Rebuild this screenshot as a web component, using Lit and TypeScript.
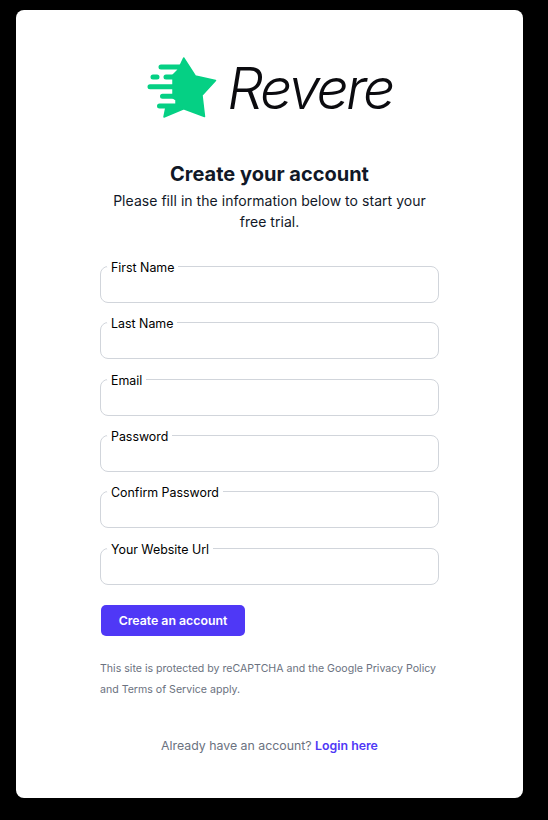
import { LitElement, html, css } from "lit";
import { customElement } from "lit/decorators.js";

const FIELDS = ["First Name", "Last Name", "Email", "Password", "Confirm Password", "Your Website Url"];

@customElement("app-root")
export class AppRoot extends LitElement {
  static styles = css`
    :host { display: block; width: 548px; height: 820px; background: #000; font-family: Inter, "Liberation Sans", sans-serif; overflow: hidden; }
    .card { margin: 10px 25px 0 16px; height: 788px; box-sizing: border-box; background: #fff; border-radius: 8px; padding: 46px 84px 0; display: flex; flex-direction: column; }
    .logo { display: flex; align-items: center; justify-content: center; gap: 10px; height: 62px; }
    .logo svg { width: 71px; height: 63px; flex: none; }
    .word { font-family: Inter, sans-serif; font-style: italic; font-weight: 300; font-size: 57px; letter-spacing: -2.7px; line-height: 62px; padding-top: 3px; color: #0b0b0f; }
    h1 { margin: 42px 0 0; font-size: 20px; line-height: 28px; font-weight: 700; color: #111827; text-align: center; letter-spacing: 0; }
    .sub { margin: 2px auto 0; width: 330px; font-size: 14px; line-height: 21px; letter-spacing: 0.04px; text-align: center; color: #111827; }
    form { margin-top: 34px; display: flex; flex-direction: column; gap: 19.35px; }
    fieldset { margin: 0; padding: 0 6px; height: 37px; box-sizing: border-box; border: 1px solid #d1d5db; border-radius: 8px; min-width: 0; }
    legend { padding: 0 4px; font-size: 12.4px; line-height: 3px; height: 1px; color: #000; }
    button { margin-top: 0.9px; align-self: flex-start; margin-left: 1px; width: 144px; height: 31px; border: 0; border-radius: 5px; background: #4f38f6; color: #fff; font: 600 12.3px Inter, sans-serif; }
    .legal { margin: 22.5px 0 0; font-size: 10.6px; line-height: 21px; color: #6b7280; }
    .login { margin: 35.5px 0 0; font-size: 12.33px; line-height: 20px; text-align: center; color: #6b7280; }
    .login a { color: #4f38f6; font-weight: 600; text-decoration: none; }
  `;

  render() {
    return html`<div class="card">
      <div class="logo">
        <svg viewBox="146 56 71 63" aria-hidden="true">
          <path fill="#05d084" stroke="#05d084" stroke-width="1.5" stroke-linejoin="round" d="M183.7 58 L195.3 76 L215.5 80.5 L202 95.3 L204.5 116.5 L183.7 108.7 L164 117 L165.8 108 L176 108 L176 100 L173 98 L173 75 L177 71 L178.5 69 Z"/>
          <g stroke="#05d084" stroke-width="5" stroke-linecap="round" fill="none">
            <path d="M161 67 H180 M153 77 H157 M166 77 H176 M150 86.7 H176 M162.5 96.3 H176 M159.5 106 H176"/>
          </g>
        </svg>
        <span class="word">Revere</span>
      </div>
      <h1>Create your account</h1>
      <p class="sub">Please fill in the information below to start your free trial.</p>
      <form @submit=${(e: Event) => e.preventDefault()}>
        ${FIELDS.map((f) => html`<fieldset><legend>${f}</legend></fieldset>`)}
        <button type="submit">Create an account</button>
      </form>
      <p class="legal">This site is protected by reCAPTCHA and the Google Privacy Policy and Terms of Service apply.</p>
      <p class="login">Already have an account? <a href="#">Login here</a></p>
    </div>`;
  }
}
